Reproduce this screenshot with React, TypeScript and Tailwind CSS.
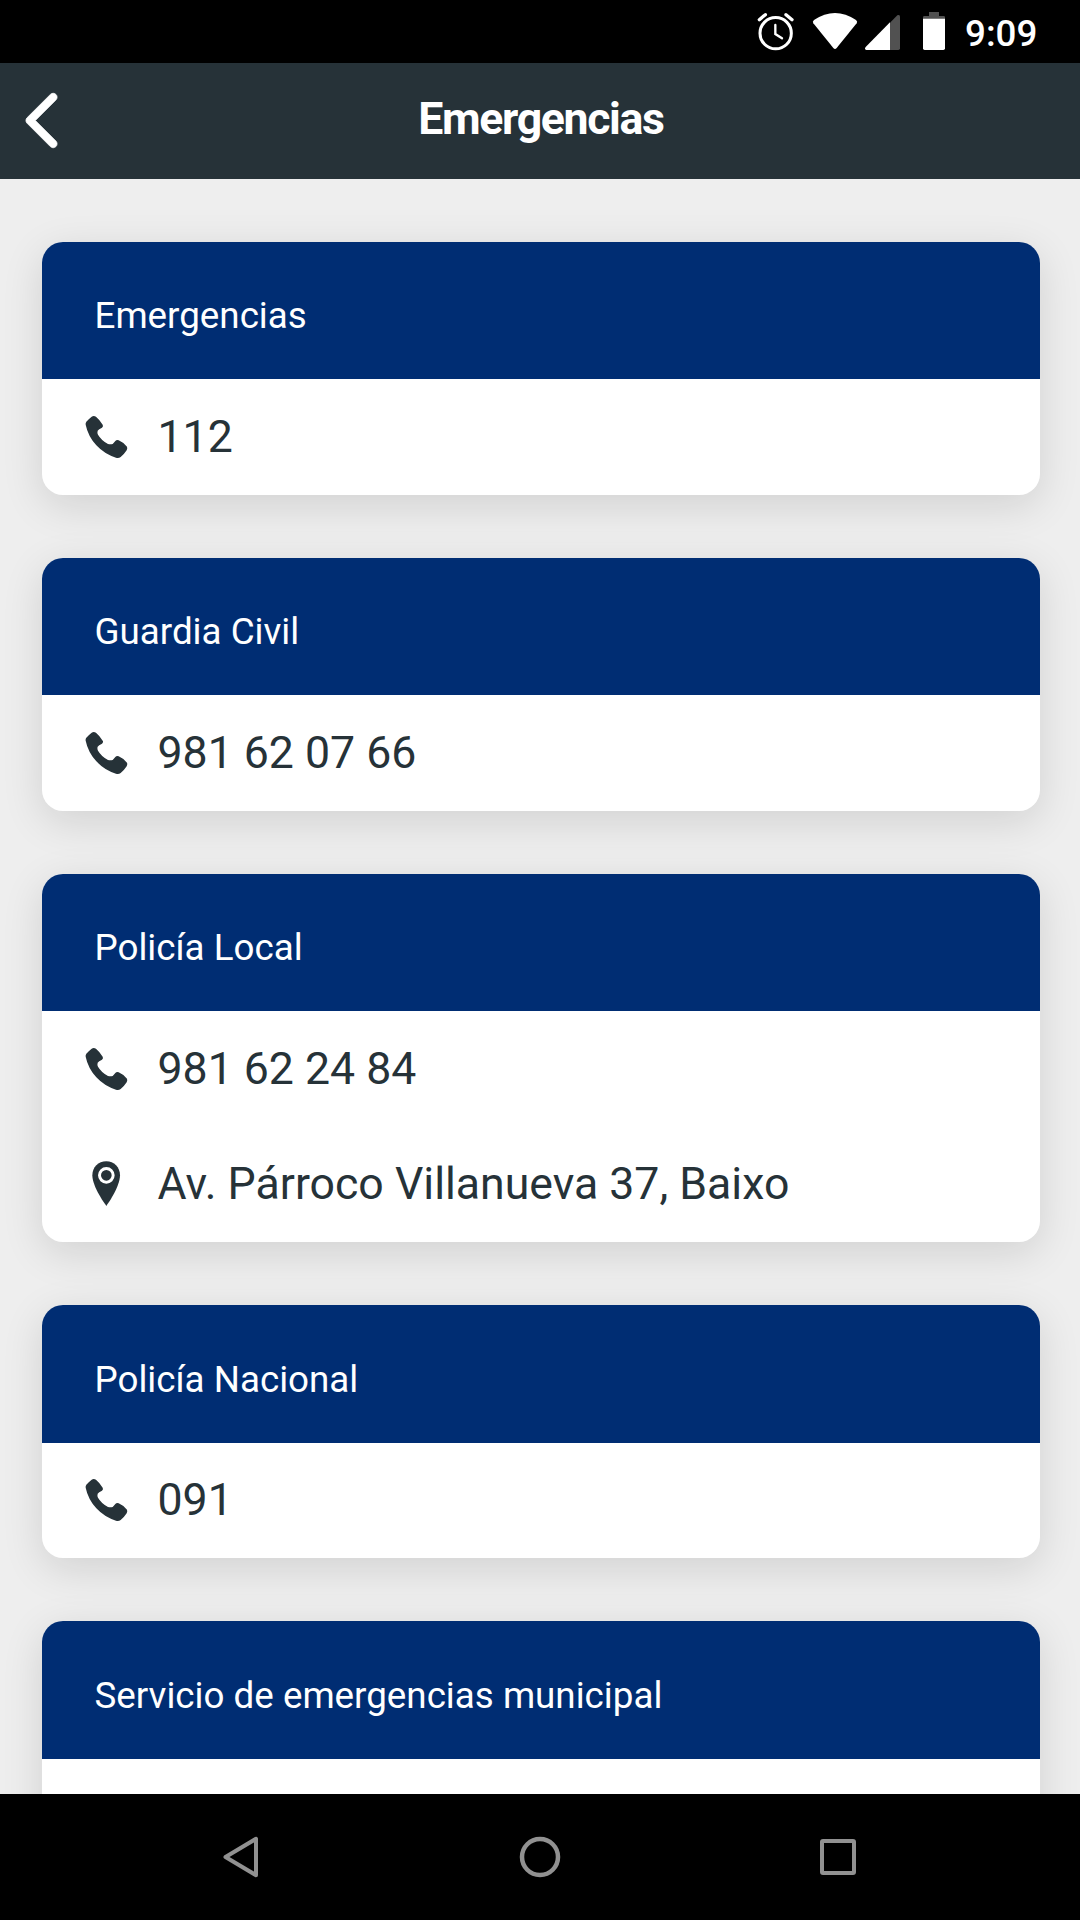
import React from 'react';
import { IoIosArrowBack } from 'react-icons/io';

interface EmergencyContact {
  name: string;
  phone?: string;
  address?: string;
}

const contacts: EmergencyContact[] = [
  { name: 'Emergencias', phone: '112' },
  { name: 'Guardia Civil', phone: '981 62 07 66' },
  { name: 'Policía Local', phone: '981 62 24 84', address: 'Av. Párroco Villanueva 37, Baixo' },
  { name: 'Policía Nacional', phone: '091' },
  { name: 'Servicio de emergencias municipal' },
];

const PhoneIcon = () => (
  <svg className="w-[60px] h-[60px] shrink-0" viewBox="0 -3 180 180" fill="currentColor">
    <path d="M41 26Q47 22 54 26Q66 36 74 50Q77 55 72 59Q62 64 59 68Q57 74 60 80Q70 97 90 108Q97 110 104 108Q107 105 112 99Q116 95 122 97Q136 103 147 116Q149 121 146 127Q139 138 128 147Q122 151 114 149Q80 139 55 112Q30 84 23 50Q22 45 25 41Q32 33 41 26Z" />
  </svg>
);

const PinIcon = () => (
  <svg className="w-[60px] h-[64px] shrink-0" viewBox="-23 0 180 192" fill="currentColor">
    <path d="M62 28C38 28 20 46 20 70C20 106 62 162 62 162C62 162 103 106 103 70C103 46 85 28 62 28Z" />
    <circle cx="62" cy="70" r="20.5" fill="none" stroke="white" strokeWidth="9" />
  </svg>
);

const StatusBar = () => (
  <div className="flex items-center justify-end h-[63px] shrink-0 bg-black text-white">
    {/* alarm */}
    <svg className="w-[50px] h-[63px]" viewBox="60 0 150 189" fill="none" stroke="currentColor" strokeLinecap="round">
      <circle cx="137" cy="99.5" r="47" strokeWidth="9" />
      <path d="M136 75V102L156 115" strokeWidth="7" />
      <path d="M88 59L106 44M168 44L186 59" strokeWidth="10" />
    </svg>
    {/* wifi */}
    <svg className="w-[60px] h-[63px]" viewBox="210 0 180 189" fill="currentColor">
      <path d="M252 60Q315 18 378 60Q384 65 380 70L320 144Q315 150 310 144L250 70Q246 65 252 60Z" />
    </svg>
    {/* mobile signal */}
    <svg className="w-[50px] h-[63px]" viewBox="390 0 150 189" fill="currentColor">
      <path d="M480 68L502 46Q510 42 510 50V145Q510 150 505 150H480Z" className="fill-[#515151]" />
      <path d="M480 67V150H409Q402 148 407 141Z" />
    </svg>
    {/* battery */}
    <svg className="w-[40px] h-[63px]" viewBox="540 0 120 189" fill="currentColor">
      <path d="M597 36H627V48H641Q645 48 645 52V57H579V52Q579 48 583 48H597Z" className="fill-[#515151]" />
      <path d="M579 56H645V145Q645 150 640 150H584Q579 150 579 145Z" />
    </svg>
    <span className="w-[130px] pl-[15px] pt-[5px] text-[36.75px] leading-none font-medium">9:09</span>
  </div>
);

const ContactCard: React.FC<{ contact: EmergencyContact }> = ({ contact }) => (
  <section className="shrink-0 rounded-[21px] overflow-hidden bg-white shadow-[0_10.5px_42px_rgba(0,0,0,0.12)]">
    <h2 className="flex items-center h-[137.5px] pl-[52.5px] pt-[12.6px] bg-[#002d73] text-white text-[36.75px] leading-none">
      {contact.name}
    </h2>
    {contact.phone && (
      <div className="flex items-center h-[115.5px] pl-[36px] gap-[19.5px]">
        <PhoneIcon />
        <span className="pt-px text-[44.625px] leading-none">{contact.phone}</span>
      </div>
    )}
    {contact.address && (
      <div className="flex items-center h-[115.5px] pl-[36px] gap-[19.5px]">
        <PinIcon />
        <span className="text-[44.625px] leading-none">{contact.address}</span>
      </div>
    )}
    {!contact.phone && <div className="h-[115.5px]" />}
  </section>
);

const NavBar = () => (
  <nav className="flex items-center justify-center h-[126px] shrink-0 bg-black text-[#919191]">
    <button type="button" className="flex justify-center w-[298px]">
      <svg className="w-[48px] h-[48px]" viewBox="0 0 48 48" fill="none" stroke="currentColor" strokeWidth="4" strokeLinejoin="round">
        <path d="M7.5 24L38 5.8V42.2Z" />
      </svg>
    </button>
    <button type="button" className="flex justify-center w-[298px]">
      <svg className="w-[48px] h-[48px]" viewBox="0 0 48 48" fill="none" stroke="currentColor" strokeWidth="4.5">
        <circle cx="24" cy="24" r="18" />
      </svg>
    </button>
    <button type="button" className="flex justify-center w-[298px]">
      <svg className="w-[48px] h-[48px]" viewBox="0 0 48 48" fill="none" stroke="currentColor" strokeWidth="4">
        <rect x="8" y="8" width="32" height="32" rx="1" />
      </svg>
    </button>
  </nav>
);

export default function App() {
  return (
    <div className="flex flex-col w-[1080px] h-[1920px] overflow-hidden bg-[#eeeeee] text-[#263238] font-[Roboto,sans-serif]">
      <StatusBar />
      <header className="grid grid-cols-[84px_1fr_84px] items-center h-[115.5px] shrink-0 bg-[#263238] text-white">
        <button type="button" aria-label="Volver" className="pb-px">
          <IoIosArrowBack className="w-[83px] h-[83px]" strokeWidth={5} />
        </button>
        <h1 className="pb-[2px] pl-[2px] text-center text-[44.625px] leading-none font-bold tracking-[-1.35px]">Emergencias</h1>
      </header>
      <main className="flex flex-col flex-1 min-h-0 gap-[63px] pt-[63px] pl-[42px] pr-[40px] overflow-hidden">
        {contacts.map((contact) => (
          <ContactCard key={contact.name} contact={contact} />
        ))}
      </main>
      <NavBar />
    </div>
  );
}
